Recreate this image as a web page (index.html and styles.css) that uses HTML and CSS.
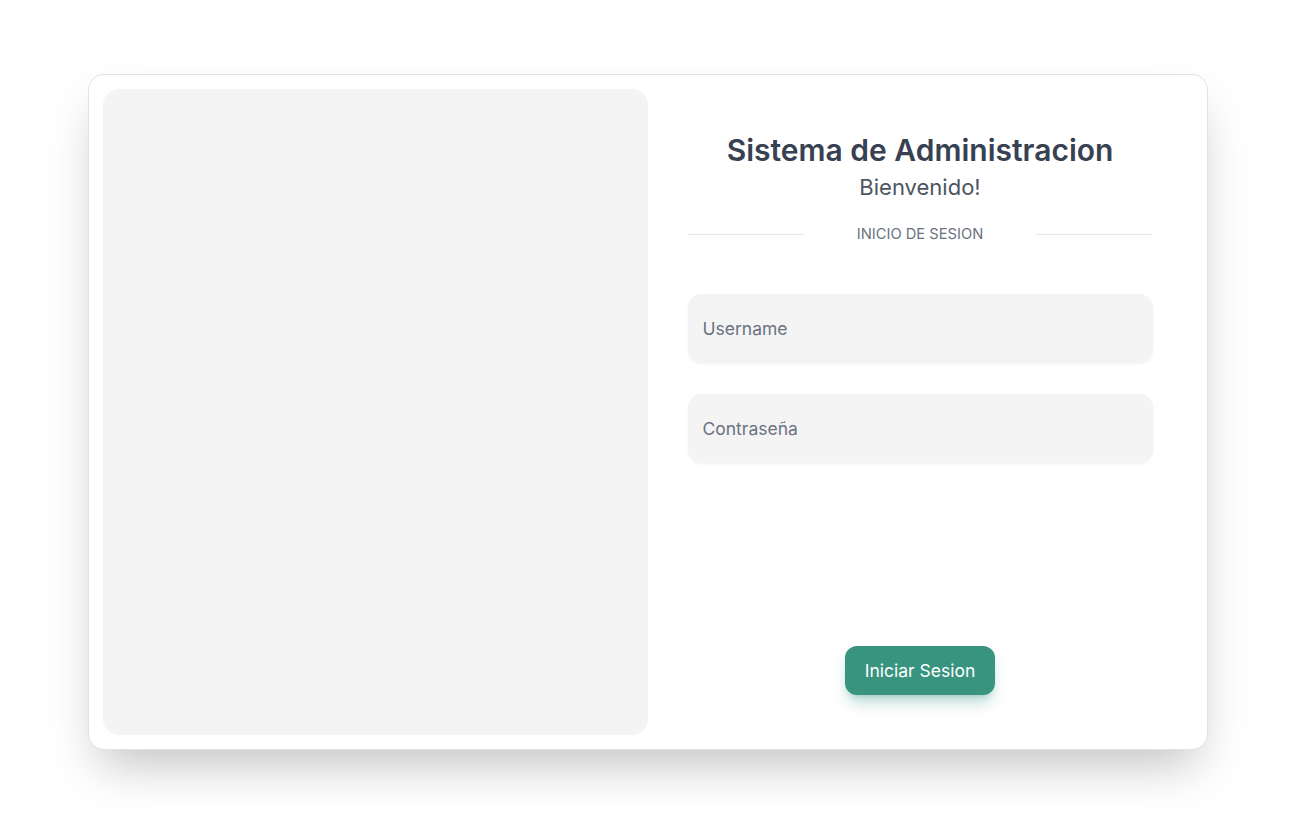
FILE: index.html
```html
<!DOCTYPE html>
<html lang="es">
<head>
<meta charset="utf-8">
<title>Sistema de Administracion</title>
<link rel="stylesheet" href="styles.css">
</head>
<body>
<main class="page">
  <section class="card">
    <div class="image-panel"></div>
    <form class="login">
      <h1 class="title">Sistema de Administracion</h1>
      <p class="subtitle">Bienvenido!</p>
      <div class="divider">
        <span class="line"></span>
        <span class="divider-text">INICIO DE SESION</span>
        <span class="line"></span>
      </div>
      <div class="fields">
        <input class="field" type="text" placeholder="Username">
        <input class="field" type="password" placeholder="Contraseña">
      </div>
      <div class="actions">
        <button class="btn" type="button">Iniciar Sesion</button>
      </div>
    </form>
  </section>
</main>
</body>
</html>
```
FILE: styles.css
```css
* { box-sizing: border-box; }
html, body { margin: 0; padding: 0; }
body {
  background: #ffffff;
  font-family: Inter, "Noto Sans", sans-serif;
  color: #374151;
}
.page {
  width: 100%;
  height: 824px;
  display: flex;
  align-items: center;
  justify-content: center;
}
.card {
  width: 1120px;
  height: 676px;
  background: #fff;
  border: 1px solid #e2e2e2;
  border-radius: 16px;
  box-shadow: 0 25px 50px -12px rgba(0,0,0,0.25);
  padding: 14px;
  display: grid;
  grid-template-columns: 1fr 1fr;
}
.image-panel {
  background: #f4f4f4;
  border-radius: 16px;
}
.login {
  display: flex;
  flex-direction: column;
  padding: 40px 40px 40px 40px;
  margin: 0;
}
.title {
  margin: 0;
  text-align: center;
  font-size: 30px;
  line-height: 36px;
  font-weight: 600;
  color: #374151;
  margin-top: 3px;
}
.subtitle {
  margin: 5px 0 0 0;
  text-align: center;
  font-size: 22px;
  line-height: 28px;
  color: #4b5563;
}
.divider {
  margin-top: 23px;
  display: flex;
  align-items: center;
  justify-content: space-between;
}
.line {
  width: 25%;
  border-top: 1px solid #e5e7eb;
}
.divider-text {
  font-size: 14.7px;
  line-height: 20px;
  color: #6b7280;
}
.fields {
  margin-top: 50px;
  display: flex;
  flex-direction: column;
  gap: 31px;
}
.field {
  display: block;
  width: 100%;
  height: 69px;
  border: none;
  outline: none;
  background: #f4f4f4;
  border-radius: 14px;
  padding: 0 15px;
  font-family: Inter, "Noto Sans", sans-serif;
  font-size: 17.5px;
  color: #374151;
  box-shadow: 0 1px 3px rgba(0,0,0,0.06);
}
.field::placeholder { color: #6b7280; }
.actions {
  margin-top: auto;
  display: flex;
  justify-content: center;
}
.btn {
  width: 150px;
  height: 49px;
  border: none;
  border-radius: 12px;
  background: #38947f;
  color: #fff;
  font-family: Inter, "Noto Sans", sans-serif;
  font-size: 17.5px;
  box-shadow: 0 10px 15px -3px rgba(58,148,128,0.35), 0 4px 6px -4px rgba(58,148,128,0.35);
  cursor: pointer;
}
```
